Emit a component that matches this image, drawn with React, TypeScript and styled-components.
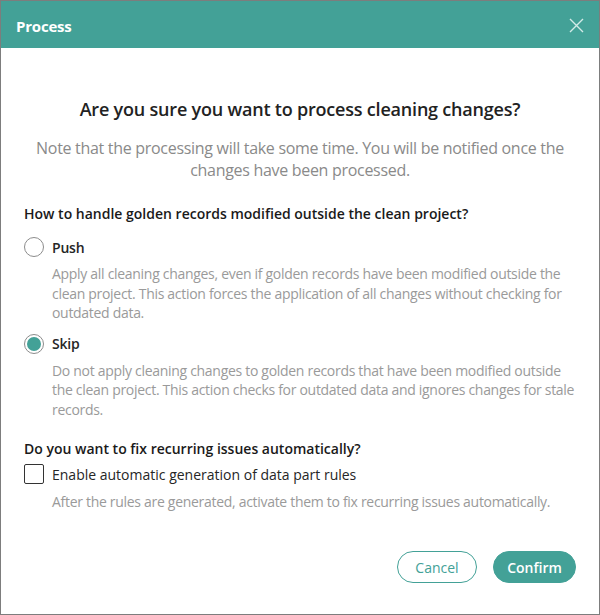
import React, { useState } from 'react'
import styled, { createGlobalStyle } from 'styled-components'

const Global = createGlobalStyle`
  html, body {
    margin: 0;
    padding: 0;
    background: #ffffff;
  }
  * { box-sizing: border-box; }
`

const teal = '#43a197'

const Dialog = styled.div`
  width: 600px;
  height: 615px;
  border: 1px solid #7d7d7d;
  background: #fff;
  display: flex;
  flex-direction: column;
  font-family: 'Open Sans', 'Noto Sans', sans-serif;
  color: #1f1f1f;
`

const Header = styled.div`
  height: 47px;
  background: ${teal};
  display: flex;
  align-items: center;
  justify-content: space-between;
  padding: 2px 14px 0 15px;
`

const Title = styled.h1`
  margin: 0;
  font-size: 15px;
  font-weight: 700;
  color: #fff;
  letter-spacing: -0.2px;
`

const Close = styled.button`
  border: none;
  background: none;
  padding: 0;
  width: 18px;
  height: 18px;
  display: flex;
  align-items: center;
  justify-content: center;
  cursor: pointer;
`

const Body = styled.div`
  flex: 1;
  padding: 49px 23px 0;
  display: flex;
  flex-direction: column;
`

const Question = styled.h2`
  margin: 0;
  text-align: center;
  font-size: 18px;
  font-weight: 600;
  color: #222;
  letter-spacing: -0.2px;
`

const Note = styled.p`
  margin: 16px -6px 0;
  text-align: center;
  font-size: 16px;
  line-height: 22px;
  color: #8a8a8a;
  letter-spacing: -0.3px;
`

const SectionTitle = styled.h3<{ $top: number }>`
  margin: ${(p) => p.$top}px 0 0;
  font-size: 14px;
  font-weight: 600;
  color: #1a1a1a;
`

const OptionRow = styled.label<{ $top: number }>`
  display: flex;
  align-items: center;
  gap: 8px;
  margin-top: ${(p) => p.$top}px;
  cursor: pointer;
`

const Radio = styled.span<{ $checked: boolean }>`
  width: 20px;
  height: 20px;
  border-radius: 50%;
  border: 1px solid #8c8c8c;
  display: flex;
  align-items: center;
  justify-content: center;
  flex-shrink: 0;
  &::after {
    content: '';
    width: 14px;
    height: 14px;
    border-radius: 50%;
    background: ${(p) => (p.$checked ? teal : 'transparent')};
  }
`

const Checkbox = styled.span`
  width: 20px;
  height: 20px;
  border: 1px solid #333;
  border-radius: 2px;
  flex-shrink: 0;
`

const OptionLabel = styled.span<{ $bold?: boolean }>`
  font-size: 14px;
  font-weight: ${(p) => (p.$bold ? 600 : 400)};
  color: #262626;
  letter-spacing: ${(p) => (p.$bold ? '-0.2px' : '0')};
`

const Hint = styled.p<{ $top?: number }>`
  margin: ${(p) => p.$top ?? 7}px 0 0 28px;
  font-size: 14px;
  line-height: 19.5px;
  color: #9a9a9a;
  letter-spacing: -0.3px;
`

const Footer = styled.div`
  display: flex;
  justify-content: flex-end;
  gap: 16px;
  padding: 0 23px 31px;
`

const Button = styled.button<{ $primary?: boolean }>`
  height: 32px;
  width: ${(p) => (p.$primary ? 83 : 80)}px;
  padding: 0;
  border-radius: 16px;
  font-family: inherit;
  font-size: 14px;
  font-weight: ${(p) => (p.$primary ? 600 : 400)};
  border: 1px solid ${teal};
  background: ${(p) => (p.$primary ? teal : '#fff')};
  color: ${(p) => (p.$primary ? '#fff' : teal)};
  cursor: pointer;
`

export default function App() {
  const [mode, setMode] = useState<'push' | 'skip'>('skip')
  return (
    <>
      <Global />
      <Dialog>
        <Header>
          <Title>Process</Title>
          <Close aria-label="Close">
            <svg width="15" height="15" viewBox="0 0 15 15">
              <path d="M1 1L14 14M14 1L1 14" stroke="#d3ebe8" strokeWidth="1.4" />
            </svg>
          </Close>
        </Header>
        <Body>
          <Question>Are you sure you want to process cleaning changes?</Question>
          <Note>
            Note that the processing will take some time. You will be notified once the changes have been processed.
          </Note>

          <SectionTitle $top={23}>How to handle golden records modified outside the clean project?</SectionTitle>
          <OptionRow $top={14} onClick={() => setMode('push')}>
            <Radio $checked={mode === 'push'} />
            <OptionLabel $bold>Push</OptionLabel>
          </OptionRow>
          <Hint>
            Apply all cleaning changes, even if golden records have been modified outside the clean project. This
            action forces the application of all changes without checking for outdated data.
          </Hint>
          <OptionRow $top={11} onClick={() => setMode('skip')}>
            <Radio $checked={mode === 'skip'} />
            <OptionLabel $bold>Skip</OptionLabel>
          </OptionRow>
          <Hint>
            Do not apply cleaning changes to golden records that have been modified outside the clean project. This
            action checks for outdated data and ignores changes for stale records.
          </Hint>

          <SectionTitle $top={20}>Do you want to fix recurring issues automatically?</SectionTitle>
          <OptionRow $top={6}>
            <Checkbox />
            <OptionLabel>Enable automatic generation of data part rules</OptionLabel>
          </OptionRow>
          <Hint $top={8}>After the rules are generated, activate them to fix recurring issues automatically.</Hint>
        </Body>
        <Footer>
          <Button>Cancel</Button>
          <Button $primary>Confirm</Button>
        </Footer>
      </Dialog>
    </>
  )
}
